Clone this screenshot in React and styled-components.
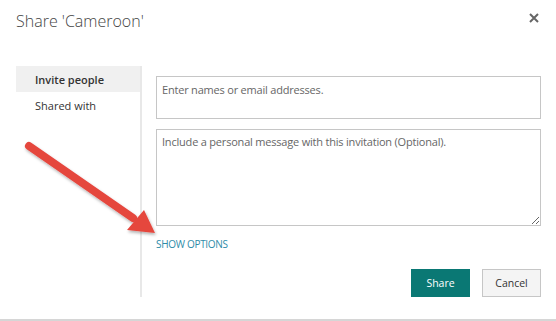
import React from "react";
import styled, { createGlobalStyle } from "styled-components";

const Global = createGlobalStyle`
  html, body { margin: 0; padding: 0; background: #fff; }
  body { font-family: "Open Sans", "Noto Sans", sans-serif; color: #333; }
  * { box-sizing: border-box; }
`;

const Page = styled.div`
  position: relative;
  width: 556px;
  height: 321px;
  overflow: hidden;
  background: #fff;
`;

const Dialog = styled.div`
  padding: 0 15px 0 16px;
`;

const Header = styled.div`
  display: flex;
  justify-content: space-between;
  align-items: flex-start;
  height: 66px;
  padding-top: 10px;
`;

const Title = styled.h1`
  margin: 0;
  font-family: "Open Sans", sans-serif;
  font-weight: 300;
  font-size: 16px;
  line-height: 22px;
  color: #444;
`;

const Close = styled.button`
  border: 0;
  background: none;
  padding: 0;
  margin-top: 1px;
  width: 14px;
  height: 14px;
  display: flex;
  align-items: center;
  justify-content: center;
  cursor: pointer;
`;

const Body = styled.div`
  display: flex;
`;

const Nav = styled.div`
  width: 126px;
  border-right: 2px solid #e8e8e8;
  display: flex;
  flex-direction: column;
`;

const NavItem = styled.div`
  height: 26px;
  display: flex;
  align-items: center;
  padding-left: 19px;
  font-size: 11px;
  color: #333;
  font-weight: ${(p) => (p.$active ? 600 : 400)};
  background: ${(p) => (p.$active ? "#f0f0f0" : "transparent")};
`;

const Main = styled.div`
  flex: 1;
  padding: 10px 0 0 14px;
  display: flex;
  flex-direction: column;
`;

const fieldCss = `
  width: 100%;
  border: 1px solid #c6c6c6;
  font-family: "Open Sans", sans-serif;
  font-size: 11px;
  letter-spacing: -0.2px;
  color: #333;
  padding: 4px 5px;
  outline: none;
  background: #fff;
  &::placeholder { color: #666; }
`;

const Input = styled.input`
  ${fieldCss}
  height: 43px;
  vertical-align: top;
  padding-bottom: 20px;
`;

const Message = styled.textarea`
  ${fieldCss}
  height: 97px;
  margin-top: 10px;
  resize: vertical;
  display: block;
`;

const Link = styled.a`
  margin-top: 11px;
  font-size: 10px;
  letter-spacing: -0.3px;
  color: #2e8ba8;
  text-transform: uppercase;
  text-decoration: none;
  line-height: 14px;
`;

const Actions = styled.div`
  display: flex;
  justify-content: flex-end;
  gap: 12px;
  margin-top: 18px;
`;

const Button = styled.button`
  width: 59px;
  height: 28px;
  font-family: "Open Sans", sans-serif;
  font-size: 10.5px;
  cursor: pointer;
  border: 1px solid ${(p) => (p.$primary ? "#0a7874" : "#c6c6c6")};
  background: ${(p) => (p.$primary ? "#0a7874" : "#f4f4f4")};
  color: ${(p) => (p.$primary ? "#fff" : "#333")};
`;

const Footer = styled.div`
  margin-top: 22px;
  border-top: 2px solid #d6d6d6;
`;

const Arrow = styled.svg`
  position: absolute;
  left: 0;
  top: 0;
  pointer-events: none;
`;

export default function App() {
  return (
    <Page>
      <Global />
      <Dialog>
        <Header>
          <Title>Share 'Cameroon'</Title>
          <Close aria-label="Close">
            <svg width="10" height="10" viewBox="0 0 10 10">
              <path d="M1 1 L9 9 M9 1 L1 9" stroke="#666" strokeWidth="2" />
            </svg>
          </Close>
        </Header>
        <Body>
          <Nav>
            <NavItem $active>Invite people</NavItem>
            <NavItem>Shared with</NavItem>
          </Nav>
          <Main>
            <Input placeholder="Enter names or email addresses." />
            <Message placeholder="Include a personal message with this invitation (Optional)." />
            <Link href="#">Show options</Link>
            <Actions>
              <Button $primary>Share</Button>
              <Button>Cancel</Button>
            </Actions>
          </Main>
        </Body>
      </Dialog>
      <Footer />
      <Arrow width="556" height="321" viewBox="0 0 556 321">
        <defs>
          <filter id="sh" x="-20%" y="-20%" width="140%" height="140%">
            <feDropShadow dx="1" dy="2" stdDeviation="1.5" floodColor="#000" floodOpacity="0.3" />
          </filter>
        </defs>
        <g filter="url(#sh)">
          <line x1="29" y1="146" x2="133" y2="218" stroke="#e5463e" strokeWidth="8" strokeLinecap="round" />
          <polygon points="155,233 127,230 144,210" fill="#e5463e" />
        </g>
      </Arrow>
    </Page>
  );
}
